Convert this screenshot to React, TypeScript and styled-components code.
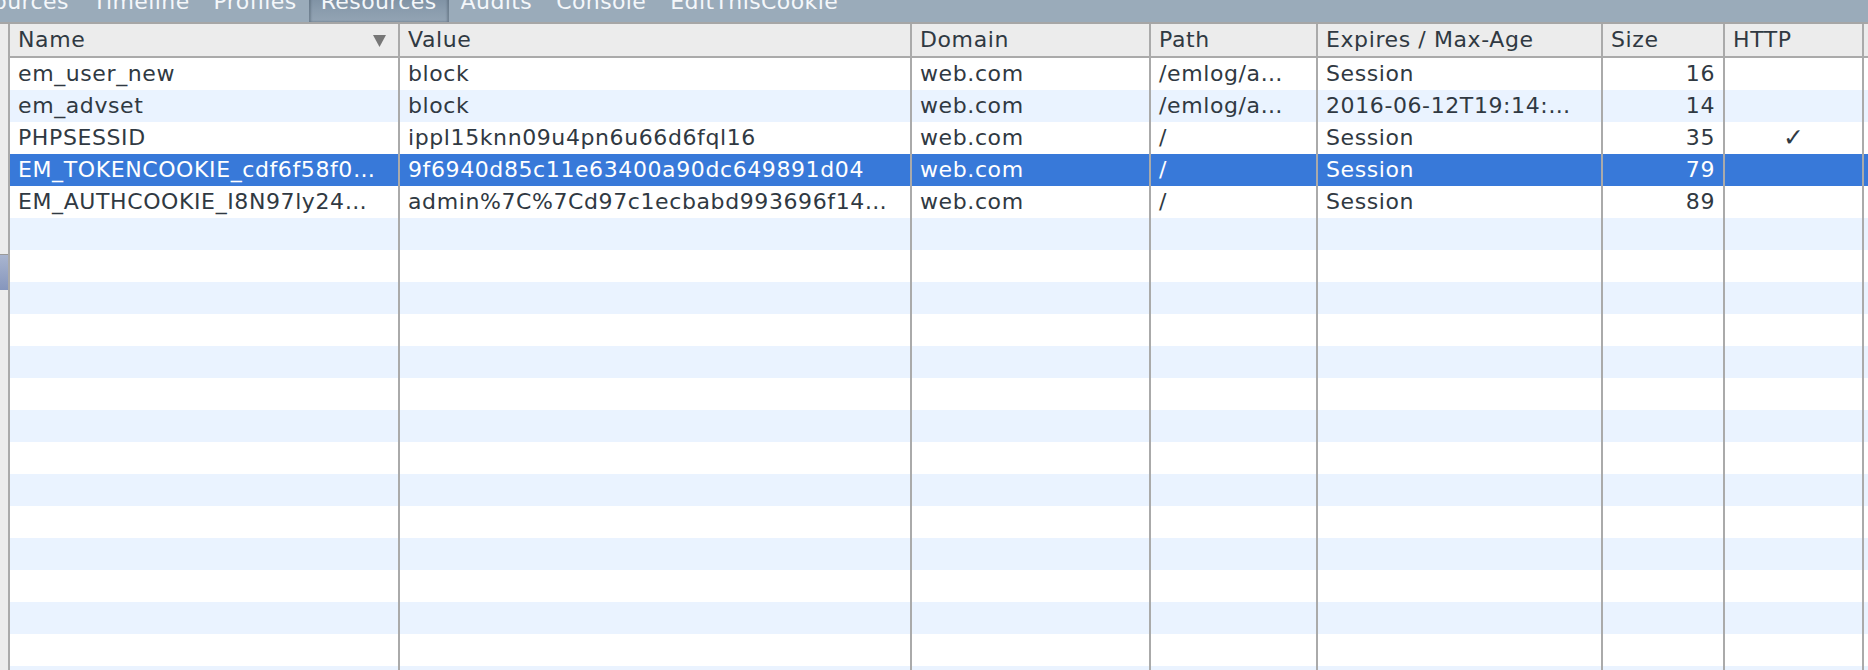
import React from "react";
import styled, { createGlobalStyle } from "styled-components";

const GlobalStyle = createGlobalStyle`
  html, body { margin: 0; padding: 0; background: #ffffff; }
  body {
    font-family: "DejaVu Sans", "Liberation Sans", sans-serif;
    overflow: hidden;
  }
  * { box-sizing: border-box; }
`;

const COLS = "390px 512px 239px 167px 285px 122px 139px 1fr";

const Page = styled.div`
  width: 1868px;
  height: 670px;
  overflow: hidden;
  display: flex;
  flex-direction: column;
`;

const TabBar = styled.div`
  height: 22px;
  flex: none;
  overflow: hidden;
  background: #9aabba;
  display: flex;
  align-items: flex-end;
`;

const TabList = styled.div`
  display: flex;
  align-items: flex-end;
  margin-left: -33px;
`;

const Tab = styled.div<{ $active?: boolean }>`
  height: 41px;
  line-height: 41px;
  padding: 0 12px;
  font-size: 22px;
  letter-spacing: 0.4px;
  color: #f4f7fa;
  white-space: nowrap;
  background: ${(p) =>
    p.$active ? "linear-gradient(#6e8296, #8a9cad 70%, #93a4b4)" : "transparent"};
  box-shadow: ${(p) =>
    p.$active ? "inset 2px 0 2px rgba(60,75,90,0.35), inset -2px 0 2px rgba(60,75,90,0.35)" : "none"};
`;

const Body = styled.div`
  flex: 1;
  min-height: 0;
  display: flex;
  border-top: 2px solid #a6a6a6;
`;

const Sidebar = styled.div`
  width: 8px;
  flex: none;
  background: #ececec;
  padding-top: 230px;
`;

const SidebarItem = styled.div`
  height: 36px;
  border-top: 1px solid #9a9a9a;
  background: linear-gradient(#a9b5cf, #8696bd);
`;

const Grid = styled.div`
  flex: 1;
  min-width: 0;
  display: flex;
  flex-direction: column;
  border-left: 2px solid #aaaaaa;
  overflow: hidden;
  font-size: 22px;
  letter-spacing: 0.6px;
  color: #303942;
`;

const HeaderRow = styled.div`
  flex: none;
  display: grid;
  grid-template-columns: ${COLS};
  height: 34px;
  background: #ececec;
  border-bottom: 2px solid #aaaaaa;
`;

const HeaderCell = styled.div<{ $last?: boolean }>`
  display: flex;
  align-items: center;
  justify-content: space-between;
  height: 32px;
  line-height: 32px;
  padding: 0 12px 0 8px;
  white-space: nowrap;
  overflow: hidden;
  border-right: ${(p) => (p.$last ? "none" : "2px solid #aaaaaa")};
`;

const SortArrow = styled.svg`
  width: 13px;
  height: 12px;
  flex: none;
  margin-top: 2px;
`;

type RowKind = "plain" | "stripe" | "selected";

const DataRow = styled.div<{ $kind: RowKind }>`
  flex: none;
  display: grid;
  grid-template-columns: ${COLS};
  height: 32px;
  background: ${(p) =>
    p.$kind === "selected" ? "#3879d9" : p.$kind === "stripe" ? "#eaf3ff" : "#ffffff"};
  color: ${(p) => (p.$kind === "selected" ? "#ffffff" : "#303942")};
`;

const Cell = styled.div<{ $align?: "left" | "right" | "center"; $last?: boolean }>`
  height: 32px;
  line-height: 32px;
  padding: 0 8px;
  white-space: nowrap;
  overflow: hidden;
  text-align: ${(p) => p.$align ?? "left"};
  border-right: ${(p) => (p.$last ? "none" : "2px solid #aaaaaa")};
`;

const Check = styled.span`
  font-size: 25px;
  font-weight: bold;
  letter-spacing: 0;
`;

type Cookie = {
  name: string;
  value: string;
  domain: string;
  path: string;
  expires: string;
  size: string;
  http: boolean;
  selected?: boolean;
};

const cookies: Cookie[] = [
  { name: "em_user_new", value: "block", domain: "web.com", path: "/emlog/a…", expires: "Session", size: "16", http: false },
  { name: "em_advset", value: "block", domain: "web.com", path: "/emlog/a…", expires: "2016-06-12T19:14:…", size: "14", http: false },
  { name: "PHPSESSID", value: "ippl15knn09u4pn6u66d6fql16", domain: "web.com", path: "/", expires: "Session", size: "35", http: true },
  { name: "EM_TOKENCOOKIE_cdf6f58f0…", value: "9f6940d85c11e63400a90dc649891d04", domain: "web.com", path: "/", expires: "Session", size: "79", http: false, selected: true },
  { name: "EM_AUTHCOOKIE_I8N97ly24…", value: "admin%7C%7Cd97c1ecbabd993696f14…", domain: "web.com", path: "/", expires: "Session", size: "89", http: false },
];

const TOTAL_ROWS = 20;
const tabs = ["Sources", "Timeline", "Profiles", "Resources", "Audits", "Console", "EditThisCookie"];

const rowKind = (i: number, selected?: boolean): RowKind =>
  selected ? "selected" : i % 2 === 1 ? "stripe" : "plain";

export default function App() {
  const empties = Array.from({ length: TOTAL_ROWS - cookies.length }, (_, k) => k + cookies.length);
  return (
    <>
      <GlobalStyle />
      <Page>
        <TabBar>
          <TabList>
            {tabs.map((t) => (
              <Tab key={t} $active={t === "Resources"}>
                {t}
              </Tab>
            ))}
          </TabList>
        </TabBar>
        <Body>
          <Sidebar>
            <SidebarItem />
          </Sidebar>
          <Grid>
            <HeaderRow>
              <HeaderCell>
                <span>Name</span>
                <SortArrow viewBox="0 0 13 12">
                  <polygon points="0,0 13,0 6.5,12" fill="#777777" />
                </SortArrow>
              </HeaderCell>
              <HeaderCell>Value</HeaderCell>
              <HeaderCell>Domain</HeaderCell>
              <HeaderCell>Path</HeaderCell>
              <HeaderCell>Expires / Max-Age</HeaderCell>
              <HeaderCell>Size</HeaderCell>
              <HeaderCell>HTTP</HeaderCell>
              <HeaderCell $last />
            </HeaderRow>
            {cookies.map((c, i) => (
              <DataRow key={c.name} $kind={rowKind(i, c.selected)}>
                <Cell>{c.name}</Cell>
                <Cell>{c.value}</Cell>
                <Cell>{c.domain}</Cell>
                <Cell>{c.path}</Cell>
                <Cell>{c.expires}</Cell>
                <Cell $align="right">{c.size}</Cell>
                <Cell $align="center">{c.http ? <Check>✓</Check> : null}</Cell>
                <Cell $last />
              </DataRow>
            ))}
            {empties.map((i) => (
              <DataRow key={i} $kind={rowKind(i)}>
                <Cell />
                <Cell />
                <Cell />
                <Cell />
                <Cell />
                <Cell />
                <Cell />
                <Cell $last />
              </DataRow>
            ))}
          </Grid>
        </Body>
      </Page>
    </>
  );
}
